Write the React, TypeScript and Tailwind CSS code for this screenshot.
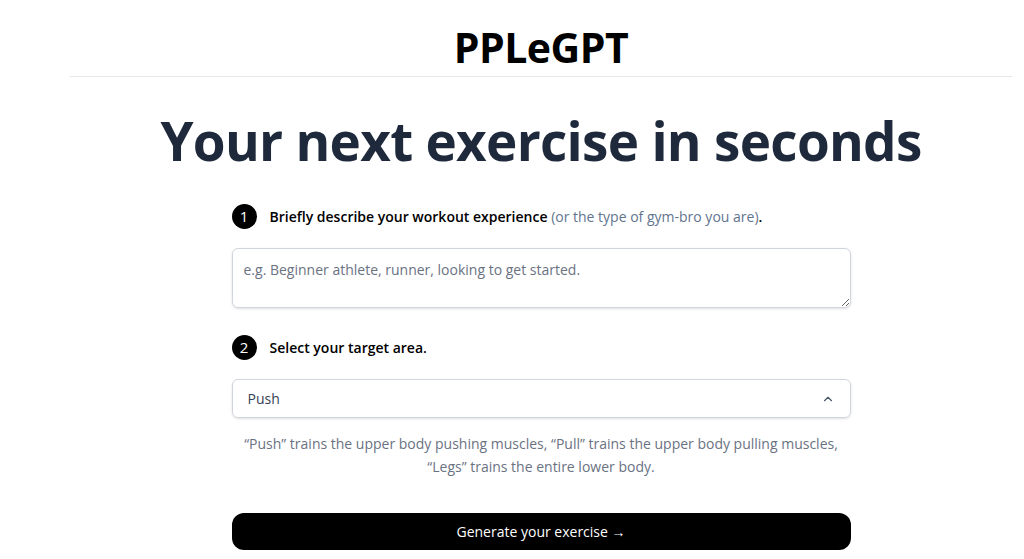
import { ChevronUp } from "lucide-react";

export default function App() {
  return (
    <div className="min-h-screen bg-white text-black" style={{ fontFamily: '"Open Sans", "Noto Sans", sans-serif' }}>
      <div className="ml-[70px] mr-[12px]">
        {/* Header */}
        <header className="flex justify-center pt-[24px] pb-[6px] border-b border-gray-200">
          <h1 className="text-[41px] leading-[46px] font-bold tracking-[-0.5px]">PPLeGPT</h1>
        </header>

        <main className="flex flex-col items-center">
          <h2 className="mt-[32px] text-[53px] leading-[64px] font-bold text-[#1e293b] tracking-[-0.7px]">
            Your next exercise in seconds
          </h2>

          <div className="w-[619px] mt-[31px]">
            {/* Step 1 */}
            <div className="flex items-center gap-[13px]">
              <span className="w-[25px] h-[25px] rounded-full bg-black text-white text-[15px] flex items-center justify-center">1</span>
              <p className="text-[14px] font-semibold">
                Briefly describe your workout experience{" "}
                <span className="font-normal text-slate-500">(or the type of gym-bro you are)</span>.
              </p>
            </div>
            <textarea
              rows={2}
              placeholder="e.g. Beginner athlete, runner, looking to get started."
              className="mt-[19px] block w-full h-[60px] rounded-md border border-gray-300 shadow-sm px-[11px] py-[10px] text-[14px] placeholder:text-gray-500"
            />

            {/* Step 2 */}
            <div className="flex items-center gap-[13px] mt-[27px]">
              <span className="w-[25px] h-[25px] rounded-full bg-black text-white text-[15px] flex items-center justify-center">2</span>
              <p className="text-[14px] font-semibold">Select your target area.</p>
            </div>
            <div className="mt-[19px] h-[39px] rounded-md border border-gray-300 shadow-sm flex items-center justify-between px-[15px] text-[14px] text-gray-700">
              <span>Push</span>
              <ChevronUp className="w-[14px] h-[14px] text-gray-600" strokeWidth={2} />
            </div>

            <p className="mt-[14px] text-center text-[14px] leading-[23px] text-gray-500">
              “Push” trains the upper body pushing muscles, “Pull” trains the upper body pulling muscles,
              <br />
              “Legs” trains the entire lower body.
            </p>

            <button className="mt-[35px] w-full h-[37px] rounded-xl bg-black text-white text-[14px] font-medium">
              Generate your exercise →
            </button>
          </div>
        </main>
      </div>
    </div>
  );
}
